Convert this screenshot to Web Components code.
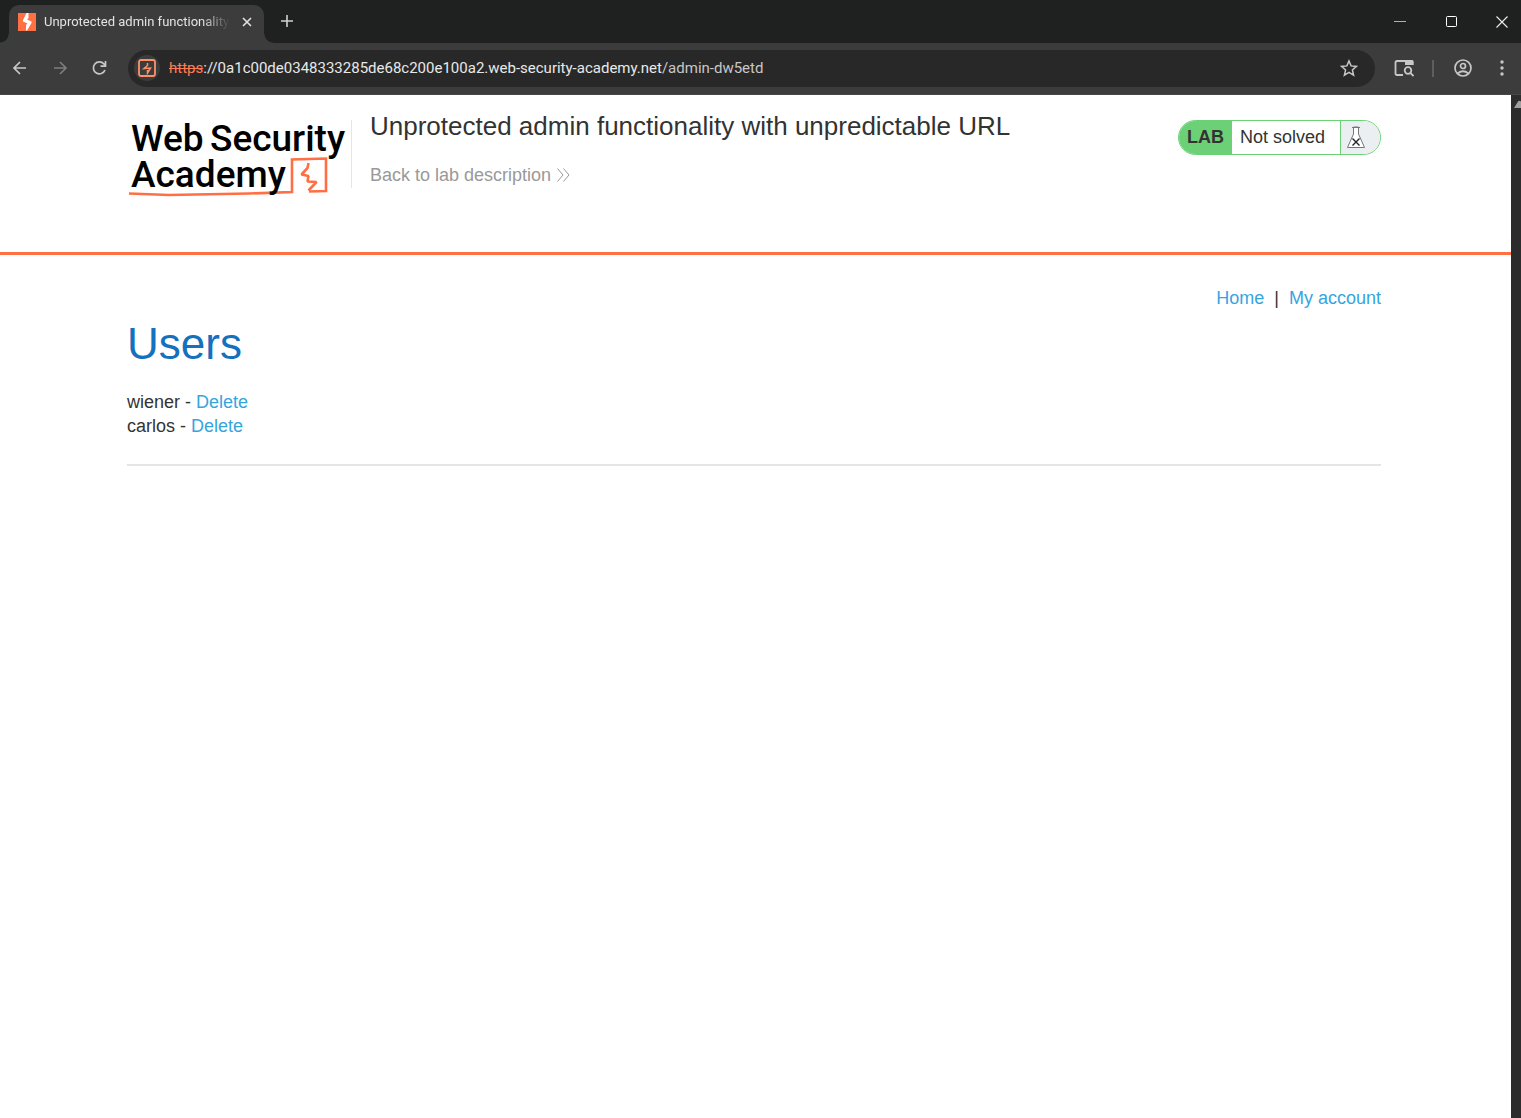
<!DOCTYPE html>
<html lang="en">
<head>
<meta charset="utf-8">
<title>Unprotected admin functionality with unpredictable URL</title>
<style>
html,body{margin:0;height:100%;background:#fff}
body{font-family:"Liberation Sans",Arial,sans-serif;font-size:18px;line-height:24px;color:#333332}
</style>
</head>
<body>
<browser-window>
  <tab-strip slot="tabs">Unprotected admin functionality with unpredictable URL</tab-strip>
  <browser-toolbar slot="toolbar"></browser-toolbar>
  <lab-header>
    <span slot="title">Unprotected admin functionality with unpredictable URL</span>
    <lab-status slot="status">Not solved</lab-status>
  </lab-header>
  <users-page>
    <user-row>wiener</user-row>
    <user-row>carlos</user-row>
  </users-page>
</browser-window>
<script>
const define = (name, html) => {
  const t = document.createElement('template');
  t.innerHTML = html;
  customElements.define(name, class extends HTMLElement {
    constructor() {
      super();
      this.attachShadow({mode: 'open'}).append(t.content.cloneNode(true));
    }
  });
};

define('browser-window', `
<style>
:host{display:flex;flex-direction:column;min-height:100vh}
.view{flex:1;display:flex}
main{flex:1;min-width:0}
.bar{width:10px;background:#2c2c2c;overflow:hidden}
svg{display:block;margin:5px 0 0 3px}
</style>
<slot name="tabs"></slot>
<slot name="toolbar"></slot>
<div class="view"><main><slot></slot></main>
<div class="bar"><svg width="12" height="8"><path d="M0 8 4 1.5Q5 0 7 1.5L11 8Z" fill="#9f9f9f"/></svg></div></div>`);

define('tab-strip', `
<style>
:host{display:flex;height:43px;box-sizing:border-box;padding-top:5px;background:#1f2120;font:13px/18px Roboto,"Open Sans",sans-serif;color:#e3e3e3}
button{border:0;background:none;padding:0;display:grid;place-items:center;color:inherit}
.flare{width:9px;height:9px;align-self:flex-end;background:radial-gradient(circle at 0 0,#1f2120 8px,#3c3c3c 9px)}
.flare.r{background:radial-gradient(circle at 100% 0,#1f2120 8px,#3c3c3c 9px)}
.tab{width:255px;height:38px;box-sizing:border-box;padding:0 8px 4px 9px;background:#3c3c3c;border-radius:10px 10px 0 0;display:flex;align-items:center}
.name{flex:1;min-width:0;margin:0 9px 0 8px;overflow:hidden;white-space:nowrap;-webkit-mask-image:linear-gradient(90deg,#000 158px,transparent 186px);mask-image:linear-gradient(90deg,#000 158px,transparent 186px)}
.close{width:18px;height:24px}
.add{width:28px;height:32px}
.win{margin-left:auto;display:flex;gap:13px}
.win button{width:38px;height:33px}
</style>
<div class="flare"></div>
<div class="tab">
<svg width="18" height="18"><path fill="#ff7043" d="M0 0h18v18H0z"/><path fill="#fff" d="M8.500 0h2v5L9 6.500l4.500 2V10L9 17.500H8V12l1.500-1.500L5 8.500V7z"/></svg>
<div class="name"><slot></slot></div>
<button class="close" aria-label="Close tab"><svg width="10" height="10" stroke="currentColor" stroke-width="1.6"><path d="M1 1l8 8M9 1l-8 8"/></svg></button>
</div>
<div class="flare r"></div>
<button class="add" aria-label="New tab"><svg width="12" height="12" stroke="#d0d0d0" stroke-width="1.6"><path d="M6 0v12M0 6h12"/></svg></button>
<div class="win">
<button aria-label="Minimize"><svg width="12" height="12" stroke="#b0b0b0"><path d="M0 5.500h12"/></svg></button>
<button aria-label="Maximize"><svg width="12" height="12" fill="none" stroke="#fff"><rect x="1.500" y=".5" width="10" height="10" rx="1"/></svg></button>
<button aria-label="Close window"><svg width="12" height="12" stroke="#eee" stroke-width="1.100"><path d="M.5.500l11 11M11.500.5l-11 11"/></svg></button>
</div>`);

define('browser-toolbar', `
<style>
:host{display:flex;align-items:center;height:52px;box-sizing:border-box;padding-bottom:1px;background:#3c3c3c;border-bottom:1px solid #474747;color:#c7c7c7}
button{width:40px;height:32px;border:0;background:none;padding:0;display:grid;place-items:center;color:inherit}
.fwd{color:#7d7d7d}
.box{flex:1;min-width:0;display:flex;align-items:center;height:37px;margin:0 9px 0 8px;padding:0 6px;box-sizing:border-box;border-radius:19px;background:#282828;font:15px/20px Roboto,"Open Sans",sans-serif}
.site{width:26px;height:26px;border-radius:50%;background:#3c3c3c}
.url{flex:1;min-width:0;margin-left:9px;overflow:hidden;white-space:nowrap;color:#c7c7c7;outline:0}
.url s{color:#fd7c54}
.url b{font-weight:400;color:#e8e8e8}
.sep{width:2px;height:17px;margin:0 9px 0 8px;background:#5e5e5e}
.menu{width:38px}
</style>
<button aria-label="Back"><svg width="16" height="14" fill="none" stroke="currentColor" stroke-width="1.700"><path d="M14 7H2M8 1 2 7l6 6"/></svg></button>
<button class="fwd" aria-label="Forward"><svg width="16" height="14" fill="none" stroke="currentColor" stroke-width="1.700"><path d="M2 7h12M8 1l6 6-6 6"/></svg></button>
<button aria-label="Reload"><svg width="16" height="16" fill="none" stroke="currentColor" stroke-width="1.700"><path d="M13 10A6 6 0 1 1 12 4L13.500 6M13.500 1v5.200H8.500"/></svg></button>
<div class="box">
<button class="site" aria-label="Site information"><svg width="18" height="18" fill="none" stroke="#fc9168"><rect x="1" y="1" width="16" height="16" rx="2" stroke-width="1.800"/><path stroke-width="1.500" d="M9.500 4v2.500L6 9.500l6.500-.5L9.500 14V11"/></svg></button>
<div class="url" role="textbox" aria-label="Address" contenteditable="true" spellcheck="false"><s>https</s><b>://0a1c00de0348333285de68c200e100a2.web-security-academy.net</b>/admin-dw5etd</div>
<button aria-label="Bookmark this page"><svg width="18" height="18" fill="none" stroke="currentColor" stroke-width="1.500"><path d="M9 2l2.100 4.900 5.300.5-4 3.500 1.200 5.200L9 13.400l-4.600 2.700 1.200-5.200-4-3.500 5.300-.5z"/></svg></button>
</div>
<button aria-label="Search in side panel"><svg width="20" height="18" fill="none" stroke="currentColor" stroke-width="1.800"><path d="M9 16H3q-1.500 0-1.500-1.500v-11Q1.500 2 3 2h14.500q1 0 1 1v3"/><path fill="currentColor" stroke="none" d="M11 1h7q1.500 0 1.500 1.500V6H11z"/><circle cx="14" cy="11.500" r="3.300"/><path d="M16.500 14l3 3"/></svg></button>
<span class="sep"></span>
<button aria-label="Profile"><svg width="18" height="18" fill="none" stroke="currentColor" stroke-width="1.700"><circle cx="9" cy="9" r="8"/><circle cx="9" cy="7" r="2.500"/><path d="M3.500 14.500q5.500-4.500 11 0"/></svg></button>
<button class="menu" aria-label="Menu"><svg width="4" height="16" fill="currentColor"><circle cx="2" cy="2" r="1.700"/><circle cx="2" cy="8" r="1.700"/><circle cx="2" cy="14" r="1.700"/></svg></button>`);

define('academy-logo', `
<style>
:host{display:block;width:224px;height:78px}
svg{display:block;overflow:visible}
text{font:500 37px Roboto,"Liberation Sans",sans-serif;fill:#000}
</style>
<svg width="224" height="78" viewBox="0 0 224 78" role="img" aria-label="Web Security Academy">
<g fill="none" stroke="#ff6f43"><path stroke-width="2.600" d="M2 73.500l40 1.500 80-1.500 43-1.500V39.500l34-1V71l-17 .5"/><path stroke-width="2.600" stroke-linejoin="bevel" d="M181.500 43l-1 5-6 6.500 7 1.500-1 5.500 9 .5-8 8.500"/></g>
<text x="4" y="31">Web</text><text x="83" y="31">Security</text><text x="4" y="67">Academy</text>
</svg>`);

define('lab-status', `
<style>
:host{display:flex;height:35px;box-sizing:border-box;border:1px solid #6bd076;border-radius:18px;overflow:hidden;width:203px;line-height:33px}
strong{background:#6bd076;width:53px;padding-left:8px;box-sizing:border-box;flex:none}
p{flex:1;margin:0;padding-left:8px}
i{width:40px;box-sizing:border-box;padding:5px 0 0 5px;border-left:1px solid #6bd076;background:#ebeff2}
svg{display:block}
</style>
<strong>LAB</strong><p><slot></slot></p>
<i><svg width="20" height="24" fill="none"><path fill="#fff" stroke="#777" d="M7.500 1v7L1.500 21.500h17l-6-13.500V1z"/><path stroke="#777" d="M6 1.500h8"/><path stroke="#222" stroke-width="1.400" d="M6.500 12.500l7 7M13.500 12.500l-7 7"/></svg></i>`);

define('lab-header', `
<style>
:host{display:flex;align-items:flex-start;height:160px;box-sizing:border-box;padding:25px 130px 0 127px;border-bottom:3px solid #ff7043}
.text{flex:1;border-left:1px solid #e5e5e5;height:68px;padding-left:18px}
h2{margin:-8px 0 0;font-size:26px;line-height:28px;font-weight:400}
a{display:inline-flex;align-items:center;gap:6px;margin-top:23px;color:#999;text-decoration:none}
</style>
<academy-logo></academy-logo>
<div class="text"><h2><slot name="title"></slot></h2>
<a href="#">Back to lab description<svg width="13" height="14" fill="none" stroke="#999"><path d="M.5.500 6 7 .5 13.500M6.500.500 12 7l-5.500 6.500"/></svg></a></div>
<slot name="status"></slot>`);

define('user-row', `
<style>:host{display:block}a{color:#35a5e0;text-decoration:none}</style>
<slot></slot> - <a href="#">Delete</a>`);

define('users-page', `
<style>
:host{display:block;padding:31px 130px 0 127px}
nav{display:flex;justify-content:flex-end;gap:10px}
a{color:#35a5e0;text-decoration:none}
h1{margin:9px 0 21px;font-size:44px;line-height:50px;font-weight:400;color:#1471bd}
hr{margin:26px 0 0;border:0;height:2px;background:#e5e5e5}
</style>
<nav><a href="#">Home</a><span>|</span><a href="#">My account</a></nav>
<h1>Users</h1>
<slot></slot>
<hr>`);
</script>
</body>
</html>
